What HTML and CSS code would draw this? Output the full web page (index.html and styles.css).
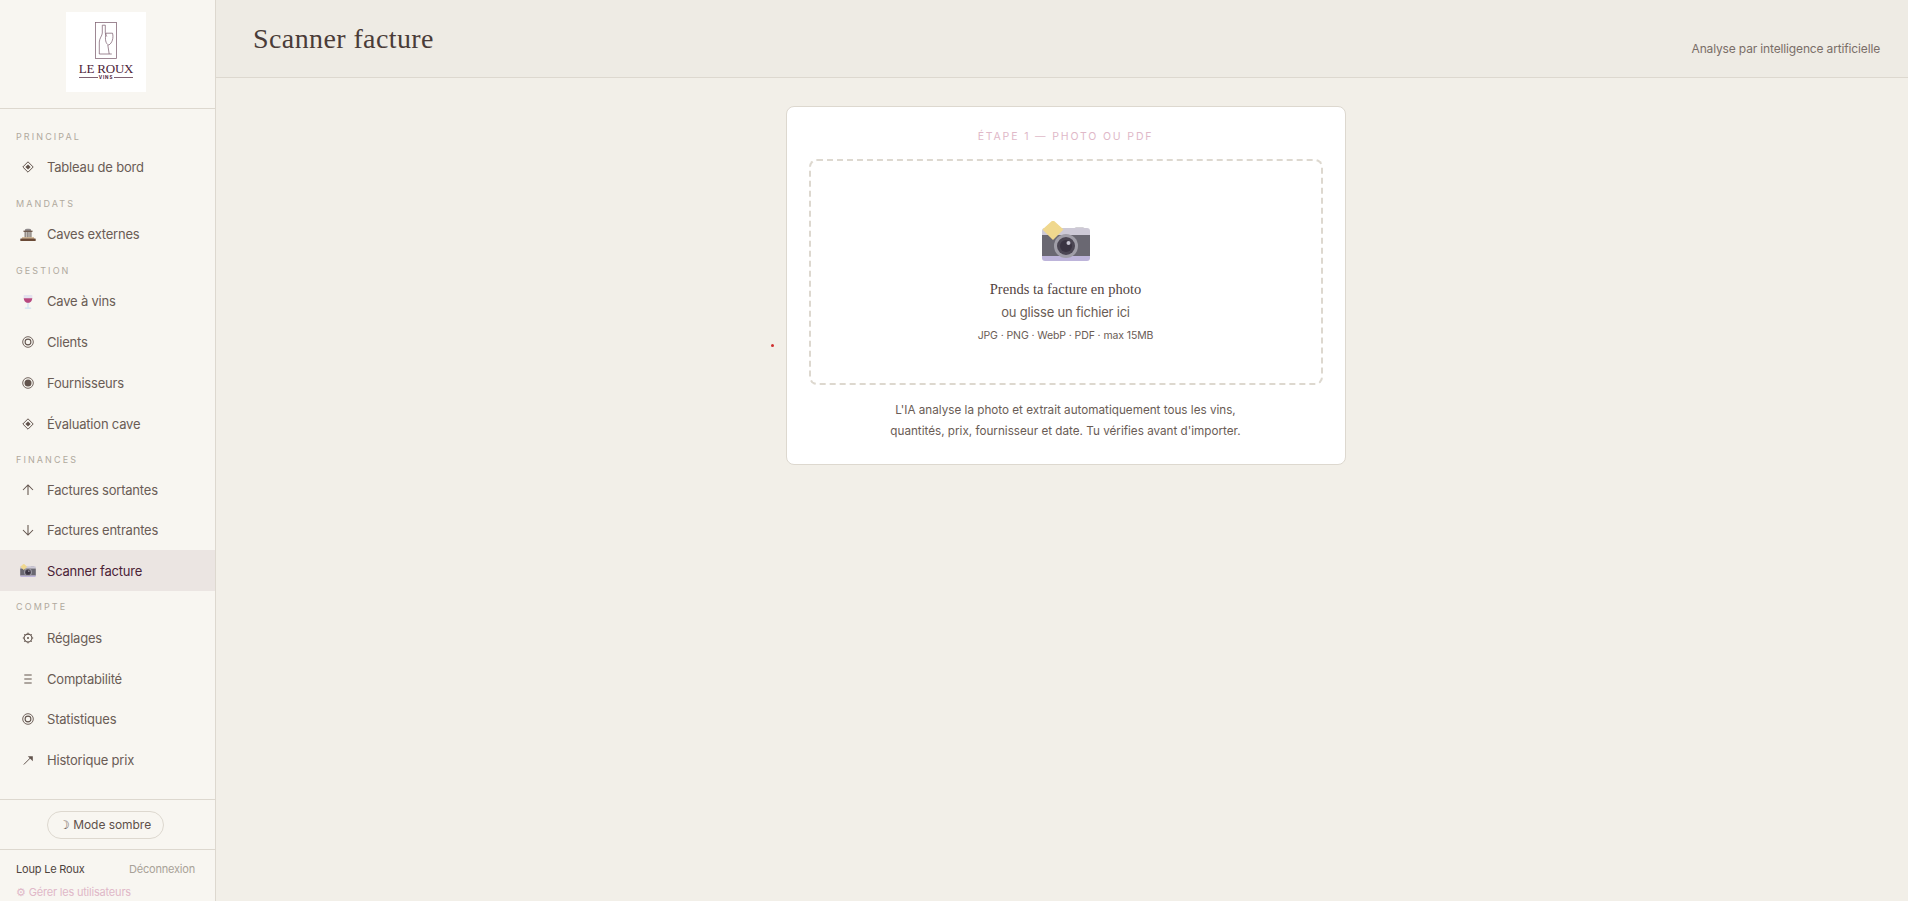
FILE: index.html
```html
<!DOCTYPE html>
<html lang="fr">
<head>
<meta charset="utf-8">
<title>Scanner facture</title>
<link rel="stylesheet" href="styles.css">
</head>
<body>
<svg class="defs" width="0" height="0" aria-hidden="true">
  <symbol id="i-diamond" viewBox="0 0 12 12"><path d="M6 .8 11.200 6 6 11.200 .8 6z" fill="none" stroke="currentColor"/><path d="M6 3.400 8.600 6 6 8.600 3.400 6z" fill="currentColor"/></symbol>
  <symbol id="i-ring" viewBox="0 0 12 12"><circle cx="6" cy="6" r="5.300" fill="none" stroke="currentColor" stroke-width=".9"/><circle cx="6" cy="6" r="2.900" fill="none" stroke="currentColor" stroke-width="1.100"/></symbol>
  <symbol id="i-dot" viewBox="0 0 12 12"><circle cx="6" cy="6" r="5.300" fill="none" stroke="currentColor" stroke-width=".9"/><circle cx="6" cy="6" r="3.500" fill="currentColor"/></symbol>
  <symbol id="i-up" viewBox="0 0 12 12"><path d="M6 11V1.200M1 6 6 1l5 5" fill="none" stroke="currentColor" stroke-width="1.050"/></symbol>
  <symbol id="i-down" viewBox="0 0 12 12"><path d="M6 1v9.800M1 6l5 5 5-5" fill="none" stroke="currentColor" stroke-width="1.050"/></symbol>
  <symbol id="i-gear" viewBox="0 0 12 12"><circle cx="6" cy="6" r="3.900" fill="none" stroke="currentColor" stroke-width="1.050"/><circle cx="6" cy="6" r="1" fill="currentColor"/><path d="M6 .6v1.600M6 9.800v1.600M.8 6h1.500M9.700 6h1.500M2.300 2.300l1 1M8.700 8.700l1 1M9.700 2.300l-1 1M3.300 8.700l-1 1" stroke="currentColor" stroke-width="1"/></symbol>
  <symbol id="i-menu" viewBox="0 0 12 12"><path d="M2.300 2h7.400M2.300 6h7.400M2.300 10h7.400" stroke="currentColor"/></symbol>
  <symbol id="i-trend" viewBox="0 0 12 12"><path d="M1.800 10.500 9 3.300" stroke="currentColor"/><path d="M5.800 2.200h5v5z" fill="currentColor"/></symbol>
  <symbol id="i-building" viewBox="0 0 16 13">
    <path d="M5 1.500C5 .5 11 .5 11 1.500V3H5z" fill="#8f8a8c"/>
    <rect x="3.500" y="2.600" width="9" height="1.400" fill="#6e5a4e"/>
    <rect x="4" y="4" width="8" height="5.500" fill="#e8e4de"/>
    <path d="M5.200 4v5.500M7.200 4v5.500M9 4v5.500M10.900 4v5.500" stroke="#6f6660" stroke-width="1"/>
    <rect x="2" y="9.300" width="12" height="1.400" fill="#c8a77e"/>
    <rect x=".3" y="10.500" width="15.400" height="2.500" rx=".5" fill="#6a4a36"/>
  </symbol>
  <symbol id="i-wine" viewBox="0 0 10 15">
    <path d="M.8 1C.2 4.500 1 8.500 5 9c4-.5 4.800-4.500 4.200-8z" fill="#e4e2ee"/>
    <path d="M.7 4.300C1 7 2.200 8.700 5 9c2.800-.3 4-2 4.300-4.700z" fill="#b9487e"/>
    <rect x="4.400" y="8.800" width="1.200" height="5" fill="#cfe2f2"/>
    <rect x="1.800" y="13.500" width="6.400" height="1.300" rx=".6" fill="#cfe2f2"/>
  </symbol>
  <symbol id="i-camera" viewBox="0 0 48 40">
    <path d="M32 8.500c0-1.200.8-2 2-2h7c1.200 0 2 .8 2 2v1H32z" fill="#a9a6ad"/>
    <path d="M3 7h42a3 3 0 0 1 3 3v4.500H0V10a3 3 0 0 1 3-3z" fill="#cdc9d6"/>
    <rect x="0" y="14" width="48" height="22" fill="#6a6872"/>
    <path d="M0 35h48v2a3 3 0 0 1-3 3H3a3 3 0 0 1-3-3z" fill="#bdb4da"/>
    <circle cx="24" cy="25" r="12" fill="#a09ea8"/>
    <circle cx="24" cy="25" r="9" fill="#4b4653"/>
    <circle cx="24" cy="25" r="6" fill="#3a3442"/>
    <circle cx="26.500" cy="22" r="2" fill="#c8c5d2"/>
    <path d="M11 0 20.500 8.500 11 18 1.500 8.500z" fill="#f0d88e" stroke="#f0d88e" stroke-linejoin="round" stroke-width="1.500"/>
  </symbol>
</svg>
<div class="app">
<aside class="sidebar">
  <div class="brand">
    <div class="logo">
      <svg class="logo-mark" viewBox="0 0 22 37" width="22" height="37" fill="none" stroke="#7f6171" stroke-width="0.75">
        <rect x="0.5" y="0.5" width="21" height="36"/>
        <path d="M7.300 3.200h3v7.800c.1 1.500 .9 2.500 1.500 3.500M7.300 3.200v7.800c0 2.500-3 5.500-3 9v12h12.500"/>
        <path d="M11 11.200h6.500c1.300 4.500-.3 10-3.700 11.800c-3.300-1-4-6-2.800-11.800zM12.800 23l1.400 9"/>
      </svg>
      <div class="logo-name">LE ROUX</div>
      <div class="logo-sub"><i></i><span>VINS</span><i></i></div>
    </div>
  </div>
  <nav class="nav">
    <div class="section">PRINCIPAL</div>
    <a class="item"><span class="ic"><svg class="icon"><use href="#i-diamond"/></svg></span>Tableau de bord</a>
    <div class="section">MANDATS</div>
    <a class="item"><span class="ic"><svg class="icon-wide"><use href="#i-building"/></svg></span>Caves externes</a>
    <div class="section">GESTION</div>
    <a class="item"><span class="ic"><svg class="icon-wine"><use href="#i-wine"/></svg></span>Cave à vins</a>
    <a class="item"><span class="ic"><svg class="icon"><use href="#i-ring"/></svg></span>Clients</a>
    <a class="item"><span class="ic"><svg class="icon"><use href="#i-dot"/></svg></span>Fournisseurs</a>
    <a class="item"><span class="ic"><svg class="icon"><use href="#i-diamond"/></svg></span>Évaluation cave</a>
    <div class="section">FINANCES</div>
    <a class="item short"><span class="ic"><svg class="icon"><use href="#i-up"/></svg></span>Factures sortantes</a>
    <a class="item short"><span class="ic"><svg class="icon"><use href="#i-down"/></svg></span>Factures entrantes</a>
    <a class="item active"><span class="ic"><svg class="icon-cam"><use href="#i-camera"/></svg></span>Scanner facture</a>
    <div class="section">COMPTE</div>
    <a class="item"><span class="ic"><svg class="icon"><use href="#i-gear"/></svg></span>Réglages</a>
    <a class="item"><span class="ic"><svg class="icon"><use href="#i-menu"/></svg></span>Comptabilité</a>
    <a class="item"><span class="ic"><svg class="icon"><use href="#i-ring"/></svg></span>Statistiques</a>
    <a class="item"><span class="ic"><svg class="icon"><use href="#i-trend"/></svg></span>Historique prix</a>
  </nav>
  <div class="theme"><button class="theme-btn">☽ Mode sombre</button></div>
  <div class="user">
    <div class="user-row"><span>Loup Le Roux</span><span class="logout">Déconnexion</span></div>
    <div class="manage">⚙ Gérer les utilisateurs</div>
  </div>
</aside>
<div class="main">
  <header class="topbar">
    <h1>Scanner facture</h1>
    <span class="tag">Analyse par intelligence artificielle</span>
  </header>
  <section class="content">
    <i class="dot"></i>
    <div class="card">
      <div class="step">ÉTAPE 1 — PHOTO OU PDF</div>
      <div class="drop">
        <svg class="cam"><use href="#i-camera"/></svg>
        <div class="d1">Prends ta facture en photo</div>
        <div class="d2">ou glisse un fichier ici</div>
        <div class="d3">JPG · PNG · WebP · PDF · max 15MB</div>
      </div>
      <p class="note">L'IA analyse la photo et extrait automatiquement tous les vins,<br>quantités, prix, fournisseur et date. Tu vérifies avant d'importer.</p>
    </div>
  </section>
</div>
</div>
</body>
</html>
```
FILE: styles.css
```css
* { box-sizing: border-box; }
html, body { margin: 0; height: 100%; overflow: hidden; }
body { font-family: Inter, "Liberation Sans", sans-serif; background: #f2efe8; color: #5e504a; }
.defs { position: absolute; }
.app { display: flex; height: 901px; }
.sidebar { width: 216px; flex: none; background: #f8f6f1; border-right: 1px solid #ddd8cf; display: flex; flex-direction: column; }
.brand { height: 109px; flex: none; border-bottom: 1px solid #ddd8cf; display: flex; justify-content: center; padding: 12px 3px 0 0; }
.logo { width: 80px; height: 80px; background: #fff; display: flex; flex-direction: column; align-items: center; padding-top: 10px; color: #4c2338; }
.logo-mark { display: block; flex: none; }
.logo-name { font-family: "Liberation Serif", serif; font-size: 13px; line-height: 11px; margin-top: 4px; letter-spacing: -0.2px; white-space: nowrap; }
.logo-sub { display: flex; align-items: center; gap: 1px; font-size: 4.500px; line-height: 5px; letter-spacing: 0.9px; font-weight: 700; margin-top: 1px; }
.logo-sub i { width: 19px; height: 1px; background: #7f6171; }
.nav { flex: 1; padding-top: 12px; }
.section { height: 26px; padding: 10px 0 0 16px; font-size: 9px; line-height: 11px; letter-spacing: 2.100px; color: #b0a99e; }
.item { display: flex; align-items: center; height: 40.900px; font-size: 13px; letter-spacing: -0.2px; color: #6a5c55; }
.item.short { height: 40px; }
.item.active { background: #ebe5e2; color: #4a2236; }
.ic { width: 47px; padding-left: 9px; flex: none; display: flex; justify-content: center; align-items: center; color: #62544d; }
.icon { width: 12px; height: 12px; display: block; }
.icon-wide { width: 16px; height: 13px; display: block; }
.icon-wine { width: 10px; height: 15px; display: block; }
.icon-cam { width: 16px; height: 13px; display: block; }
.theme { height: 51px; flex: none; border-top: 1px solid #ddd8cf; border-bottom: 1px solid #ddd8cf; display: flex; align-items: center; justify-content: center; padding-right: 5px; }
.theme-btn { width: 117px; height: 28px; border: 1px solid #ddd8cf; border-radius: 15px; background: transparent; font: inherit; font-size: 12px; letter-spacing: -0.05px; color: #5e504a; padding: 0; }
.user { height: 51px; flex: none; padding: 12px 20px 0 16px; font-size: 11px; letter-spacing: -0.2px; }
.user-row { display: flex; justify-content: space-between; color: #4f443e; }
.logout { color: #a8a298; }
.manage { margin-top: 9px; color: #e0b8c8; }
.main { flex: 1; display: flex; flex-direction: column; min-width: 0; }
.topbar { height: 78px; flex: none; background: #eeebe4; border-bottom: 1px solid #ddd8cf; display: flex; justify-content: space-between; padding: 0 28px 0 37px; }
h1 { margin: 22px 0 0; font-family: "Liberation Serif", serif; font-weight: 400; font-size: 28px; line-height: 34px; color: #4a3c38; letter-spacing: 0.4px; }
.tag { font-size: 12px; letter-spacing: -0.15px; margin-top: 41px; color: #7a6e68; }
.content { flex: 1; display: flex; justify-content: center; align-items: flex-start; padding: 28px 0 0 7px; position: relative; }
.dot { position: absolute; left: 555px; top: 266px; width: 3px; height: 3px; border-radius: 50%; background: #cf2f2f; }
.card { width: 560px; height: 359px; background: #fff; border: 1px solid #ddd8cf; border-radius: 8px; padding: 23px 22px 0; }
.step { text-align: center; font-size: 10.500px; line-height: 14px; letter-spacing: 1.850px; color: #e0b8c8; }
.drop { margin-top: 15px; height: 226px; border: 2px dashed #ddd8cf; border-radius: 8px; display: flex; flex-direction: column; align-items: center; padding-top: 60px; }
.cam { width: 48px; height: 40px; display: block; flex: none; }
.d1 { margin-top: 18px; font-family: "Liberation Serif", serif; font-size: 14.500px; line-height: 20px; color: #52443f; }
.d2 { margin-top: 3px; font-size: 13px; letter-spacing: -0.2px; line-height: 20px; color: #6a5c55; }
.d3 { margin-top: 4px; font-size: 10.500px; letter-spacing: -0.1px; line-height: 20px; color: #6a5c55; }
.note { margin: 15px 0 0; text-align: center; font-size: 11.700px; line-height: 21px; color: #6a5c55; }
```
